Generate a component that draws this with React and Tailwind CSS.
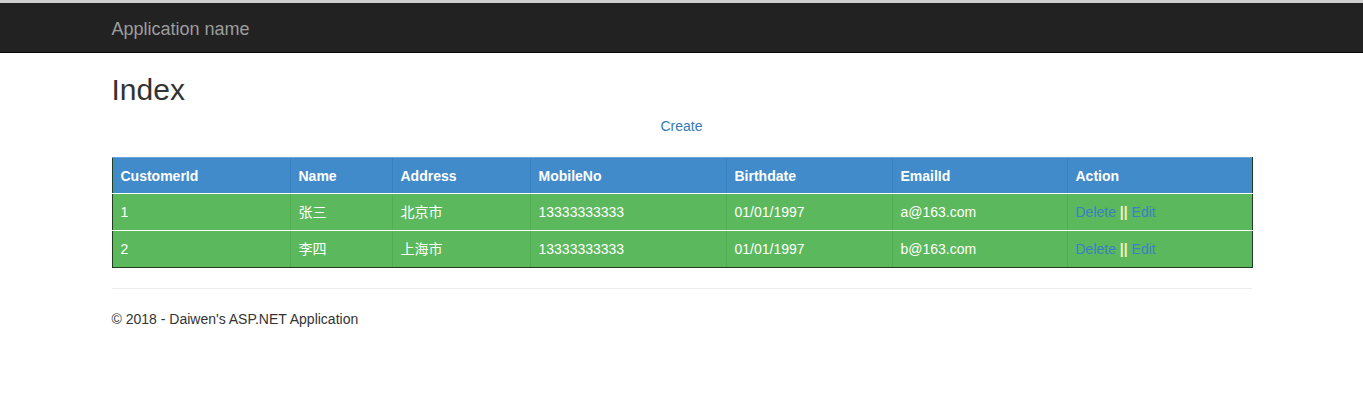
import React from "react";

const cols = [
  { h: "CustomerId", w: "w-[178px]" },
  { h: "Name", w: "w-[102px]" },
  { h: "Address", w: "w-[138px]" },
  { h: "MobileNo", w: "w-[196px]" },
  { h: "Birthdate", w: "w-[166px]" },
  { h: "EmailId", w: "w-[175px]" },
  { h: "Action", w: "w-[185px]" },
];

const rows = [
  ["1", "张三", "北京市", "13333333333", "01/01/1997", "a@163.com"],
  ["2", "李四", "上海市", "13333333333", "01/01/1997", "b@163.com"],
];

export default function App() {
  return (
    <div
      className="min-h-[397px] bg-white text-[14px] leading-[20px] text-[#333]"
      style={{ fontFamily: '"Liberation Sans", Arial, "Noto Sans CJK SC", sans-serif' }}
    >
      <div className="h-[3px] bg-[#cfcfcf]" />
      <div className="h-[50px] bg-[#222] border-b border-[#080808]">
        <div className="w-[1140px] mx-auto h-[49px] flex items-center pt-[2px]">
          <span className="text-[18px] text-[#9d9d9d]">Application name</span>
        </div>
      </div>
      <div className="w-[1140px] mx-auto">
        <h2 className="mt-[20px] mb-[10px] text-[30px] leading-[33px] font-normal text-[#333]">Index</h2>
        <p className="text-center mb-[10px]">
          <a className="text-[#337ab7]">Create</a>
        </p>
        <table className="mt-[21px] w-[1140px] table-fixed border-collapse">
          <thead>
            <tr className="bg-[#428bca] h-[36px]">
              {cols.map((c, i) => (
                <th
                  key={c.h}
                  className={`${c.w} text-left font-bold text-white px-[8px] py-0 border-t border-t-[#6aa3d8] border-b border-b-white ${i === 0 ? "border-l border-l-[#1f3f1f]" : "border-l border-l-[#3a7fbe]"} ${i === 6 ? "border-r border-r-[#1f3f1f]" : ""}`}
                >
                  {c.h}
                </th>
              ))}
            </tr>
          </thead>
          <tbody>
            {rows.map((r, ri) => (
              <tr key={ri} className="bg-[#5cb85c] h-[37px]">
                {r.map((v, i) => (
                  <td
                    key={i}
                    className={`px-[8px] py-0 text-white ${i === 0 ? "border-l border-l-[#1f3f1f]" : "border-l border-l-[#52ac52]"} ${ri === 0 ? "border-b border-b-white" : "border-b border-b-[#1f3f1f]"}`}
                  >
                    {v}
                  </td>
                ))}
                <td
                  className={`px-[8px] py-0 border-l border-l-[#52ac52] border-r border-r-[#1f3f1f] ${ri === 0 ? "border-b border-b-white" : "border-b border-b-[#1f3f1f]"}`}
                >
                  <a className="text-[#3a80c4]">Delete</a>{" "}
                  <span className="text-[#f3f3c4] font-bold">||</span>{" "}
                  <a className="text-[#3a80c4]">Edit</a>
                </td>
              </tr>
            ))}
          </tbody>
        </table>
        <hr className="mt-[20px] mb-[20px] border-0 border-t border-[#eee]" />
        <footer>
          <p>© 2018 - Daiwen's ASP.NET Application</p>
        </footer>
      </div>
    </div>
  );
}
